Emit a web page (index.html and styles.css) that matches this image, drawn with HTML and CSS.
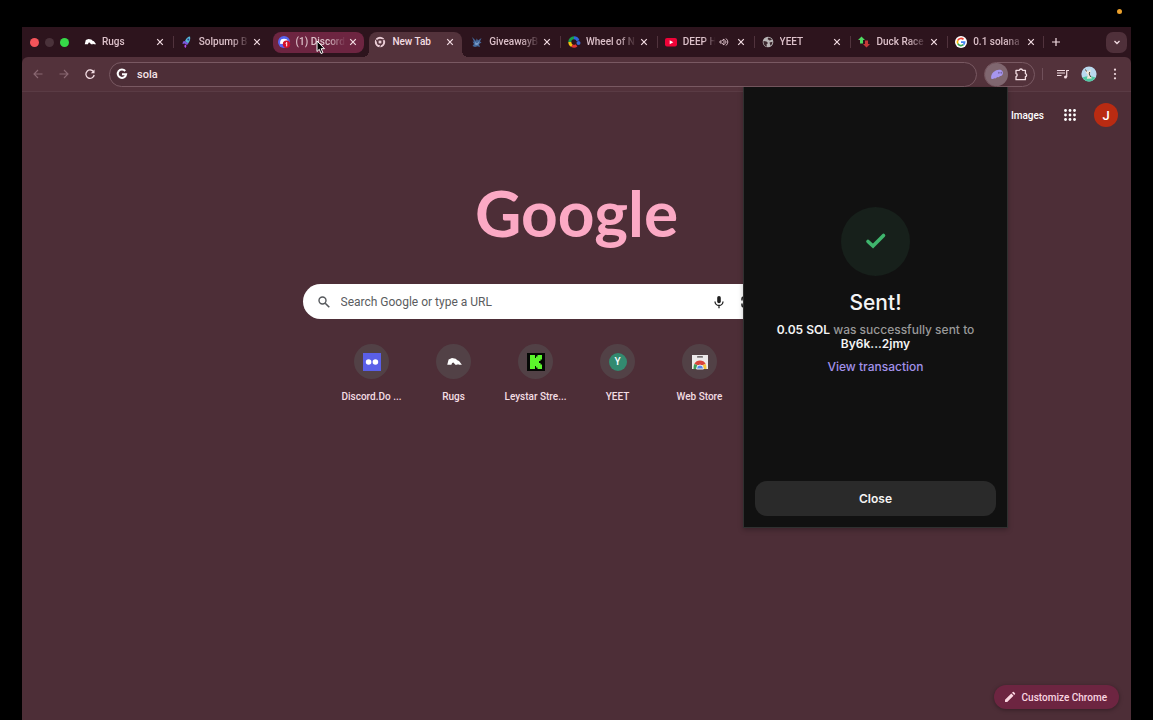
FILE: index.html
```html
<!DOCTYPE html>
<html lang="en">
<head>
<meta charset="utf-8">
<meta name="viewport" content="width=device-width, initial-scale=1">
<title>New Tab</title>
<link rel="stylesheet" href="styles.css">
</head>
<body>
<!-- shared icons -->
<svg class="defs" width="0" height="0" aria-hidden="true">
  <symbol id="i-close" viewBox="0 0 8 8"><path d="M1.200 1.200l5.600 5.600M6.800 1.200L1.200 6.800" fill="none" stroke="currentColor" stroke-width="1.200"/></symbol>
  <symbol id="i-rugs" viewBox="-1 -1 16 16"><path d="M1 9.500l1.200-4.700 3-1.300 3.300.5 1.500 1.500 1.500.5 2.500 3.500h-2.600l-1.400-.9.400.9H8.200L6.500 7.500l-1.200.3-.6 1.700z" fill="#fff"/></symbol>
</svg>
<span class="rec-dot"></span>
<div class="window">
  <div class="tabstrip">
    <div class="lights"><span class="red"></span><span class="idle"></span><span class="green"></span></div>
    <div class="tabs">
      <div class="tab">
        <svg class="fav"><use href="#i-rugs"/></svg>
        <span class="title">Rugs</span>
        <button class="close" aria-label="Close tab"><svg><use href="#i-close"/></svg></button>
      </div>
      <div class="tab sep">
        <svg class="fav" viewBox="0 0 14 14"><path d="M5 6q2-4.500 5-4.500 1 3.500-2 7z" fill="#55b9d6"/><path d="M5 6L3 6.500 2.500 9l2-.5 2.500 1.500 1.500-1.500z" fill="#7a5be0"/><path d="M5 9.500q2.500 1 .5 3.500-2-1.500-.5-3.500z" fill="#b14be8"/><circle cx="8.300" cy="4.500" r="1" fill="#2b3c8c"/></svg>
        <span class="title">Solpump B</span>
        <button class="close" aria-label="Close tab"><svg><use href="#i-close"/></svg></button>
      </div>
      <div class="tab hover">
        <svg class="fav" viewBox="0 0 14 14"><circle cx="7" cy="7" r="6" fill="#5865f2"/><path d="M3 8.800q0-3.300 1.300-4.500 2.700-1 5.400 0 .8.800 1.100 2.200L8 9.200z" fill="#fff"/><circle cx="9.500" cy="9.300" r="3.700" fill="#d3122c"/><path d="M8.600 8.300l1.100-.9v4" fill="none" stroke="#fff" stroke-width="1"/></svg>
        <span class="title">(1) Discord</span>
        <button class="close" aria-label="Close tab"><svg><use href="#i-close"/></svg></button>
      </div>
      <div class="tab active">
        <svg class="fav" viewBox="0 0 14 14"><circle cx="7" cy="7" r="5" fill="#5d3a45"/><circle cx="7" cy="7" r="4.200" fill="none" stroke="#ebcdd6" stroke-width="2"/><path d="M7 4.700h5M5 8.100L2.500 3.800M9 8.100l-2.500 4.300" stroke="#53323b" stroke-width=".9"/><circle cx="7" cy="7" r="2" fill="#ebcdd6" stroke="#53323b" stroke-width=".8"/></svg>
        <span class="title">New Tab</span>
        <button class="close" aria-label="Close tab"><svg><use href="#i-close"/></svg></button>
      </div>
      <div class="tab">
        <svg class="fav" viewBox="0 0 14 14"><path d="M2 2l4 4 .7-2.500L8 5.500 11.500 3 10 6.500l1.500 1L9 9l1 3-2.500-.8L5 12l-2.500-1L4 9 2.500 6.500 4 6.800z" fill="#456a9e"/><path d="M5 7l2 1.500L9.500 6 8 9.500 5.500 10z" fill="#86a6cf"/></svg>
        <span class="title">GiveawayB</span>
        <button class="close" aria-label="Close tab"><svg><use href="#i-close"/></svg></button>
      </div>
      <div class="tab sep">
        <svg class="fav" viewBox="0 0 14 14"><g fill="none" stroke-width="3"><path d="M7 2.800A4.200 4.200 0 0 0 2.800 7" stroke="#18a04a"/><path d="M2.800 7A4.200 4.200 0 0 0 5 10.700" stroke="#f4c20d"/><path d="M5 10.700a4.200 4.200 0 0 0 4.500-.3" stroke="#e23434"/><path d="M7 2.800a4.200 4.200 0 0 1 4 3" stroke="#2f66d8"/></g><circle cx="11.500" cy="8" r="2" fill="#3869d4"/><circle cx="7" cy="7" r="1.500" fill="#2d141d"/></svg>
        <span class="title">Wheel of N</span>
        <button class="close" aria-label="Close tab"><svg><use href="#i-close"/></svg></button>
      </div>
      <div class="tab sep">
        <svg class="fav" viewBox="0 0 14 14"><rect x="1" y="3" width="12" height="8.500" rx="2" fill="#f00338"/><path d="M5.700 5.300l3.600 2-3.600 2z" fill="#fff"/></svg>
        <span class="title">DEEP H</span>
        <svg class="audio" viewBox="0 0 10 10"><path d="M1 4v2h1.700L5 8V2L2.700 4z" fill="none" stroke="currentColor"/><path d="M6.500 3.500q1 1.500 0 3M7 1.500q3.700 3.500 0 7" fill="none" stroke="currentColor"/></svg>
        <button class="close" aria-label="Close tab"><svg><use href="#i-close"/></svg></button>
      </div>
      <div class="tab sep">
        <svg class="fav" viewBox="0 0 14 14"><circle cx="7" cy="7" r="5.300" fill="#b9b5b6"/><path d="M2.500 6l3 .5L7 8 5.500 9.500l.5 2.200Q2 10.500 2.500 6zM7.500 2.500l-1 1.500 2 1.500 2.500-.7Q10 3 7.500 2.500zM8.500 7.500l3-.8q0 2.700-2 4z" fill="#3b272d"/></svg>
        <span class="title">YEET</span>
        <button class="close" aria-label="Close tab"><svg><use href="#i-close"/></svg></button>
      </div>
      <div class="tab sep">
        <svg class="fav" viewBox="0 0 14 14"><path d="M4.500 1.500L8 5H6v3.500H3V5H1z" fill="#4ddc62"/><path d="M8 5.500h3V9h2l-3.500 3.500L6 9h2z" fill="#c43a3a"/></svg>
        <span class="title">Duck Race</span>
        <button class="close" aria-label="Close tab"><svg><use href="#i-close"/></svg></button>
      </div>
      <div class="tab sep">
        <svg class="fav" viewBox="0 0 14 14"><circle cx="7" cy="7" r="6" fill="#fff"/><g fill="none" stroke-width="1.700"><path d="M9.500 4.400A3.600 3.600 0 0 0 3.800 5.400" stroke="#ea4335"/><path d="M3.800 5.400a3.600 3.600 0 0 0 0 3.300" stroke="#fbbc05"/><path d="M3.800 8.700a3.600 3.600 0 0 0 5.600 1" stroke="#34a853"/><path d="M9.400 9.700A3.600 3.600 0 0 0 10.600 7.200H7" stroke="#4285f4"/></g></svg>
        <span class="title">0.1 solana</span>
        <button class="close" aria-label="Close tab"><svg><use href="#i-close"/></svg></button>
      </div>
    </div>
    <button class="new-tab" aria-label="New tab"><svg viewBox="0 0 10 10"><path d="M5 1v8M1 5h8" stroke="currentColor" stroke-width="1.200"/></svg></button>
    <button class="tab-search" aria-label="Search tabs"><svg viewBox="0 0 10 10"><path d="M2.500 4L5 6.500 7.500 4" fill="none" stroke="currentColor" stroke-width="1.300"/></svg></button>
  </div>

  <div class="toolbar">
    <button class="nav dim" aria-label="Back"><svg viewBox="0 0 12 12"><path d="M10.500 6H2M6 2L2 6l4 4" fill="none" stroke="currentColor" stroke-width="1.100"/></svg></button>
    <button class="nav dim" aria-label="Forward"><svg viewBox="0 0 12 12"><path d="M1.500 6H10M6 2l4 4-4 4" fill="none" stroke="currentColor" stroke-width="1.100"/></svg></button>
    <button class="nav" aria-label="Reload"><svg viewBox="0 0 12 12"><path d="M9.800 4.200A4.200 4.200 0 1 0 10.200 7" fill="none" stroke="currentColor" stroke-width="1.300"/><path d="M10.500 1.500v3.700H6.800z" fill="currentColor"/></svg></button>
    <div class="omnibox">
      <svg viewBox="0 0 12 12"><path d="M9.200 3A4.200 4.200 0 1 0 10.100 6.300H6" fill="none" stroke="#fff" stroke-width="2"/></svg>
      <input type="text" value="sola" aria-label="Address">
    </div>
    <div class="extensions">
      <button class="wallet" aria-label="Wallet"><svg viewBox="0 0 14 14"><path d="M1.200 11.500Q.5 8 3.500 5 7 2 10.500 2.800q3 1.200 2.300 4.200-.8 2.600-2.800 2-1.200 1.800-2.800 1-1.200 1.800-2.700 1.300-2 1.500-3.300.2z" fill="#a796ef"/><ellipse cx="8.900" cy="5.800" rx=".6" ry="1" fill="#67558a"/><ellipse cx="11.200" cy="5.800" rx=".6" ry="1" fill="#67558a"/></svg></button>
      <button class="puzzle" aria-label="Extensions"><svg viewBox="0 0 14 14"><path d="M2 3.300h3.300a1.700 1.700 0 0 1 3.300 0h2.800v3.300a1.600 1.600 0 0 1 0 3.100v3H2V9.600a1.600 1.600 0 0 0 0-3.100z" fill="none" stroke="currentColor" stroke-width="1.300" stroke-linejoin="round"/></svg></button>
    </div>
    <span class="divider"></span>
    <button class="tool" aria-label="Media"><svg viewBox="0 0 14 14"><path d="M1 3.500h8M1 6h8M1 8.500h4.500M10.700 10V3.500H13" fill="none" stroke="currentColor" stroke-width="1.200"/><circle cx="9.500" cy="10" r="1.500" fill="currentColor"/></svg></button>
    <button class="tool" aria-label="Profile"><svg class="profile" viewBox="0 0 16 16"><circle cx="8" cy="8" r="7.600" fill="#b9d9ee"/><path d="M1.500 11.500q6-2.500 13 0Q12 15.600 8 15.600t-6.500-4.100z" fill="#4fc9a0"/><path d="M4 3l3 2.500L9.500 3v3L8.800 8l2 4.500-5 .3L7 9 5 6.500z" fill="#f0e9da"/><path d="M4.500 3.500l1 2M8.700 6l-.5 2 1.500 3" stroke="#4b4740" fill="none"/></svg></button>
    <button class="tool" aria-label="Menu"><svg viewBox="0 0 14 14"><g fill="currentColor"><circle cx="7" cy="2.700" r="1.100"/><circle cx="7" cy="7" r="1.100"/><circle cx="7" cy="11.300" r="1.100"/></g></svg></button>
  </div>

  <main class="page">
    <header class="topbar">
      <a href="#">Images</a>
      <button class="apps" aria-label="Google apps"><svg viewBox="0 0 14 14"><g fill="#fff"><circle cx="2.500" cy="2.500" r="1.400"/><circle cx="7" cy="2.500" r="1.400"/><circle cx="11.500" cy="2.500" r="1.400"/><circle cx="2.500" cy="7" r="1.400"/><circle cx="7" cy="7" r="1.400"/><circle cx="11.500" cy="7" r="1.400"/><circle cx="2.500" cy="11.500" r="1.400"/><circle cx="7" cy="11.500" r="1.400"/><circle cx="11.500" cy="11.500" r="1.400"/></g></svg></button>
      <button class="account">J</button>
    </header>

    <h1 class="logo">Google</h1>

    <form class="search">
      <svg viewBox="0 0 14 14"><circle cx="5.500" cy="5.500" r="3.500" fill="none" stroke="#55585c" stroke-width="1.400"/><path d="M8.200 8.200l4.100 4.100" stroke="#55585c" stroke-width="1.600"/></svg>
      <input type="text" placeholder="Search Google or type a URL" aria-label="Search">
      <button type="button" aria-label="Voice search"><svg viewBox="0 0 14 14"><rect x="5.200" y="1" width="3.600" height="7.300" rx="1.800" fill="#1f1f1f"/><path d="M3 6.500a4 4 0 0 0 8 0M7 10.500v2.700" fill="none" stroke="#1f1f1f" stroke-width="1.300"/></svg></button>
      <button type="button" aria-label="Image search"><svg viewBox="0 0 14 14"><path d="M2 5.500V4a2 2 0 0 1 2-2h1.500M8.500 2H10a2 2 0 0 1 2 2v1.500M2 8.500V10a2 2 0 0 0 2 2h3" fill="none" stroke="#1f1f1f" stroke-width="1.500"/><circle cx="7" cy="7" r="2" fill="#1f1f1f"/></svg></button>
    </form>

    <nav class="shortcuts">
      <a href="#"><span class="disc"><svg viewBox="0 0 18 18"><path d="M0 0h18v18H0z" fill="#5a5fe8"/><circle cx="5.600" cy="9" r="2.800" fill="#fff"/><circle cx="12.400" cy="9" r="2.800" fill="#fff"/></svg></span>Discord.Do ...</a>
      <a href="#"><span class="disc"><svg><use href="#i-rugs"/></svg></span>Rugs</a>
      <a href="#"><span class="disc"><svg viewBox="0 0 18 18"><path d="M0 0h18v18H0z" fill="#050805"/><path d="M3 2h5v3h1V3.500h1.500V2H15v4.500h-1.500V8H12v2h1.500v1.500H15V16h-4.500v-1.500H9V13H8v3H3z" fill="#5bf52b"/></svg></span>Leystar Stre...</a>
      <a href="#"><span class="disc"><span class="letter">Y</span></span>YEET</a>
      <a href="#"><span class="disc"><svg viewBox="0 0 18 18"><path d="M1 2h16v14H1z" fill="#eceaeb"/><rect x="6" y="3.300" width="6" height="1.300" rx=".6" fill="#4a4446"/><path d="M3.300 11A6.500 6.500 0 0 1 14.700 11L12 12H6z" fill="#d9443c"/><path d="M3.300 11Q2.300 13 2.500 16H7l-1-4z" fill="#3f9d58"/><path d="M14.700 11q1 2 .8 5H11l1-4z" fill="#f5c33b"/><path d="M5.500 16a3.500 4 0 0 1 7 0z" fill="#4f86ec" stroke="#eceaeb"/></svg></span>Web Store</a>
    </nav>

    <button class="customize"><svg viewBox="0 0 12 12"><path d="M1 11V8.800L7.300 2.500l2.200 2.200L3.200 11zM8 1.800l.8-.8q.5-.4 1 0L11 2.200q.4.500 0 1l-.8.800z" fill="currentColor"/></svg>Customize Chrome</button>
  </main>

  <section class="popup">
    <div class="result">
      <span class="badge"><svg viewBox="0 0 22 22"><path d="M3 11.500l5 4.500L18.500 5.500" fill="none" stroke="#3fb56d" stroke-width="3.600" stroke-linecap="round"/></svg></span>
      <h2>Sent!</h2>
      <p><b>0.05 SOL</b> was successfully sent to<br><b>By6k...2jmy</b></p>
      <a href="#">View transaction</a>
    </div>
    <button class="done">Close</button>
  </section>
</div>
<svg class="cursor" viewBox="0 0 10 15"><path d="M1 1v10.500l2.300-2.200 1.700 4.200 1.900-.8-1.700-4h3.300z" fill="#000" stroke="#fff" stroke-width="1"/></svg>
</body>
</html>
```
FILE: styles.css
```css
* {
  box-sizing: border-box;
}
body {
  margin: 0;
  padding: 27px 22px 0;
  background-color: #000;
  color: #f3dde3;
  font-family: Roboto, "Liberation Sans", sans-serif;
  font-size: 10px;
  font-weight: 500;
}
button {
  padding: 0;
  border: 0;
  background: none;
  color: inherit;
  font: inherit;
  display: flex;
  align-items: center;
  justify-content: center;
}
input {
  border: 0;
  padding: 0;
  outline: 0;
  background: none;
  font: inherit;
  flex: 1;
  min-width: 0;
}
a {
  color: inherit;
  text-decoration: none;
}
svg {
  display: block;
  flex: none;
}
.defs {
  position: absolute;
}
.rec-dot {
  position: absolute;
  top: 9px;
  right: 31px;
  width: 5px;
  height: 5px;
  border-radius: 50%;
  background-color: #eba02c;
}
.window {
  position: relative;
  display: flex;
  flex-direction: column;
  min-height: calc(100vh - 27px);
  background-color: #2d141d;
}

/* tab strip */
.tabstrip {
  display: flex;
  align-items: center;
  height: 30px;
}
.lights {
  display: flex;
  gap: 6px;
  width: 54px;
  padding-left: 8px;
}
.lights span {
  width: 9px;
  height: 9px;
  border-radius: 50%;
}
.red { background-color: #f4545a; }
.idle { background-color: #4a323a; }
.green { background-color: #36d948; }
.tabs {
  display: flex;
  flex: 1;
  min-width: 0;
  height: 30px;
}
.tab {
  position: relative;
  flex: 1 1 0;
  min-width: 0;
  display: flex;
  align-items: center;
  padding: 0 8px 0 7px;
  color: #dcc0c9;
}
.tab.sep::after,
.tabs .tab:last-child::before {
  content: "";
  position: absolute;
  left: 0;
  top: 9px;
  width: 1px;
  height: 12px;
  background-color: #51333d;
}
.tabs .tab:last-child::before {
  left: auto;
  right: 0;
}
.fav {
  width: 14px;
  height: 14px;
}
.title {
  flex: 1;
  min-width: 0;
  margin-left: 5px;
  overflow: hidden;
  white-space: nowrap;
  line-height: 14px;
  -webkit-mask-image: linear-gradient(to right, #000 60%, transparent 96%);
  mask-image: linear-gradient(to right, #000 60%, transparent 96%);
}
.active .title {
  -webkit-mask-image: none;
  mask-image: none;
}
.audio {
  width: 10px;
  height: 10px;
  margin: 0 7px 0 2px;
}
.close {
  width: 10px;
  height: 14px;
  color: #f3dde3;
}
.close svg {
  width: 8px;
  height: 8px;
}
.hover::before {
  content: "";
  position: absolute;
  inset: 5px 2px 4px 3px;
  border-radius: 8px;
  background-color: #6d2541;
}
.hover > * {
  position: relative;
}
.active {
  color: #f3dde3;
}
.active::before {
  content: "";
  position: absolute;
  inset: 5px 1px 0 3px;
  border-radius: 8px 8px 0 0;
  background-color: #53323b;
}
.active > * {
  position: relative;
}
.active::after {
  content: "";
  position: absolute;
  left: -3px;
  right: -5px;
  bottom: 0;
  height: 6px;
  background:
    radial-gradient(circle at 0 0, transparent 6px, #53323b 6px) left / 6px 6px no-repeat,
    radial-gradient(circle at 100% 0, transparent 6px, #53323b 6px) right / 6px 6px no-repeat;
}
.new-tab {
  width: 24px;
  height: 20px;
}
.new-tab svg,
.tab-search svg {
  width: 10px;
  height: 10px;
}
.tab-search {
  width: 21px;
  height: 21px;
  margin: 0 4px 0 38px;
  border-radius: 7px;
  background-color: #4f303a;
}

/* toolbar */
.toolbar {
  display: flex;
  align-items: center;
  height: 35px;
  padding: 0 3px;
  border-bottom: 1px solid #5a3b44;
  border-radius: 6px 6px 0 0;
  background-color: #53323b;
}
.nav,
.tool {
  width: 26px;
  height: 24px;
}
.nav svg {
  width: 12px;
  height: 12px;
}
.dim {
  color: #8a6872;
}
.omnibox {
  flex: 1;
  display: flex;
  align-items: center;
  gap: 9px;
  height: 25px;
  margin: 0 7px 0 6px;
  padding: 0 6px;
  border: 1px solid #795962;
  border-radius: 13px;
  background-color: #4d2e37;
}
.omnibox svg {
  width: 12px;
  height: 12px;
}
.omnibox input {
  color: #f5e4e8;
  font-size: 11px;
}
.extensions {
  display: flex;
  align-items: center;
  height: 25px;
  width: 51px;
  border: 1px solid #795962;
  border-radius: 13px;
}
.wallet {
  width: 23px;
  height: 23px;
  border-radius: 50%;
  background-color: #806770;
}
.puzzle {
  flex: 1;
}
.wallet svg,
.puzzle svg,
.tool svg {
  width: 14px;
  height: 14px;
}
.tool .profile {
  width: 16px;
  height: 16px;
}
.divider {
  width: 1px;
  height: 12px;
  margin: 0 7px 0 7px;
  background-color: #70505a;
}

/* new tab page */
.page {
  position: relative;
  flex: 1;
  display: flex;
  flex-direction: column;
  align-items: center;
  background-color: #4d2e37;
}
.topbar {
  align-self: stretch;
  display: flex;
  align-items: center;
  justify-content: flex-end;
  gap: 12px;
  padding: 11px 13px 0 0;
  color: #fff;
}
.apps {
  width: 24px;
  height: 24px;
}
.apps svg {
  width: 14px;
  height: 14px;
}
.topbar a {
  margin-right: 2px;
}
.account {
  width: 24px;
  height: 24px;
  border-radius: 50%;
  background-color: #b92b12;
  font-size: 13px;
}
.logo {
  margin: 48px 0 0;
  color: #fba9c4;
  font-family: Lato, sans-serif;
  font-size: 64px;
  font-weight: 700;
  line-height: 76px;
}
.search {
  display: flex;
  align-items: center;
  width: 548px;
  max-width: 100%;
  height: 35px;
  margin-top: 33px;
  padding: 0 90px 0 14px;
  border-radius: 18px;
  background-color: #fff;
}
.search svg {
  width: 14px;
  height: 14px;
}
.search input {
  margin-left: 10px;
  font-size: 12px;
  font-weight: 400;
}
.search input::placeholder {
  color: #5a5c60;
  opacity: 1;
}
.search button {
  width: 28px;
  height: 28px;
}
.shortcuts {
  display: grid;
  grid-template-columns: repeat(6, 82px);
  margin-top: 25px;
}
.shortcuts a {
  display: flex;
  flex-direction: column;
  align-items: center;
  gap: 11px;
  line-height: 14px;
  white-space: nowrap;
}
.disc {
  display: flex;
  align-items: center;
  justify-content: center;
  width: 35px;
  height: 35px;
  border-radius: 50%;
  background-color: #524146;
}
.disc svg {
  width: 18px;
  height: 18px;
}
.letter {
  width: 18px;
  height: 18px;
  border-radius: 50%;
  background-color: #338a70;
  color: #fff;
  line-height: 18px;
  text-align: center;
}
.customize {
  position: absolute;
  right: 12px;
  bottom: 11px;
  gap: 6px;
  height: 24px;
  padding: 0 12px 0 10px;
  border-radius: 12px;
  background-color: #6d2541;
  box-shadow: 0 1px 4px rgba(0, 0, 0, .35);
  color: #fbd6e1;
}
.customize svg {
  width: 12px;
  height: 12px;
}

/* wallet popup */
.popup {
  position: absolute;
  top: 60px;
  right: 123px;
  display: flex;
  flex-direction: column;
  width: 265px;
  height: 441px;
  padding: 12px 11px 11px;
  border: 1px solid #303030;
  border-top: 0;
  background-color: #111;
  box-shadow: 0 2px 5px rgba(0, 0, 0, .25);
  color: #f4f4f4;
  font-family: Inter, "Liberation Sans", sans-serif;
  font-size: 12px;
  line-height: 14px;
  text-align: center;
}
.result {
  flex: 1;
  display: flex;
  flex-direction: column;
  align-items: center;
  justify-content: center;
}
.badge {
  display: flex;
  align-items: center;
  justify-content: center;
  width: 69px;
  height: 69px;
  border-radius: 50%;
  background-color: #17201b;
}
.badge svg {
  width: 22px;
  height: 22px;
}
.popup h2 {
  margin: 14px 0 7px;
  font-size: 21px;
  font-weight: 500;
  line-height: 26px;
}
.popup p {
  margin: 0 0 9px;
  color: #999;
  font-weight: 500;
}
.popup b {
  color: #f4f4f4;
  font-weight: 600;
}
.popup a {
  color: #a291ea;
  font-weight: 500;
}
.done {
  height: 35px;
  border-radius: 12px;
  background-color: #2a2a2a;
  font-weight: 600;
}
.cursor {
  position: absolute;
  left: 316px;
  top: 40px;
  width: 10px;
  height: 15px;
}
```
